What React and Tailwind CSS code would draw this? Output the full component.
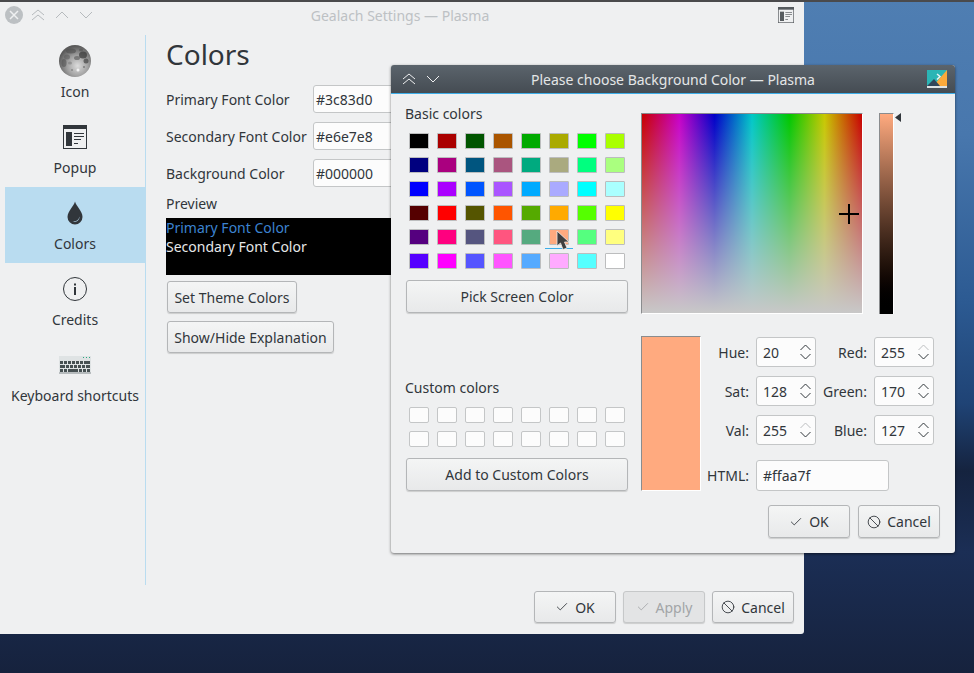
import { Check, Ban } from "lucide-react";

const basicColors = [
  "bg-[#000000]", "bg-[#aa0000]", "bg-[#005500]", "bg-[#aa5500]", "bg-[#00aa00]", "bg-[#aaaa00]", "bg-[#00ff00]", "bg-[#aaff00]",
  "bg-[#00007f]", "bg-[#aa007f]", "bg-[#00557f]", "bg-[#aa557f]", "bg-[#00aa7f]", "bg-[#aaaa7f]", "bg-[#00ff7f]", "bg-[#aaff7f]",
  "bg-[#0000ff]", "bg-[#aa00ff]", "bg-[#0055ff]", "bg-[#aa55ff]", "bg-[#00aaff]", "bg-[#aaaaff]", "bg-[#00ffff]", "bg-[#aaffff]",
  "bg-[#550000]", "bg-[#ff0000]", "bg-[#555500]", "bg-[#ff5500]", "bg-[#55aa00]", "bg-[#ffaa00]", "bg-[#55ff00]", "bg-[#ffff00]",
  "bg-[#55007f]", "bg-[#ff007f]", "bg-[#55557f]", "bg-[#ff557f]", "bg-[#55aa7f]", "bg-[#ffaa7f]", "bg-[#55ff7f]", "bg-[#ffff7f]",
  "bg-[#5500ff]", "bg-[#ff00ff]", "bg-[#5555ff]", "bg-[#ff55ff]", "bg-[#55aaff]", "bg-[#ffaaff]", "bg-[#55ffff]", "bg-[#ffffff]",
];

function MoonIcon() {
  return (
    <svg width="32" height="32" viewBox="0 0 32 32">
      <defs>
        <radialGradient id="moon" cx="58%" cy="65%" r="62%">
          <stop offset="0%" stopColor="#dcdcdc" />
          <stop offset="50%" stopColor="#a4a4a4" />
          <stop offset="100%" stopColor="#5a5a5a" />
        </radialGradient>
      </defs>
      <circle cx="16" cy="16" r="16" fill="url(#moon)" />
      <ellipse cx="12" cy="6" rx="5" ry="2.500" fill="#4f4f4f" opacity="0.6" />
      <ellipse cx="24" cy="10" rx="4" ry="3.500" fill="#3c3c3c" opacity="0.75" />
      <ellipse cx="27" cy="16" rx="2.500" ry="2.500" fill="#444" opacity="0.7" />
      <ellipse cx="18" cy="13" rx="3" ry="2" fill="#4c4c4c" opacity="0.55" />
      <ellipse cx="8" cy="12" rx="3" ry="2.500" fill="#5a5a5a" opacity="0.55" />
      <ellipse cx="5" cy="18" rx="2.500" ry="4" fill="#505050" opacity="0.55" />
      <ellipse cx="11" cy="18" rx="2" ry="1.500" fill="#6a6a6a" opacity="0.45" />
      <ellipse cx="22" cy="5" rx="2" ry="1.500" fill="#4a4a4a" opacity="0.5" />
      <circle cx="19" cy="25" r="1.500" fill="#f2f2f2" />
      <circle cx="25" cy="22" r="1" fill="#7c7c7c" />
      <circle cx="13" cy="25" r="1" fill="#8a8a8a" />
    </svg>
  );
}

function PopupIcon({ size = 24, className = "" }) {
  return (
    <svg width={size} height={size} viewBox="0 0 24 24" className={className}>
      <rect x="0.5" y="0.5" width="23" height="23" fill="#eff0f1" stroke="#31363b" />
      <rect x="0" y="0" width="24" height="4" fill="#31363b" />
      <rect x="3" y="7" width="6" height="14" fill="#31363b" />
      <rect x="11" y="8" width="10" height="1" fill="#31363b" />
      <rect x="11" y="11" width="10" height="1" fill="#31363b" />
      <rect x="11" y="14" width="7" height="1" fill="#31363b" />
      <rect x="11" y="18" width="4" height="1" fill="#31363b" />
    </svg>
  );
}

function DropIcon() {
  return (
    <svg width="16" height="24" viewBox="0 0 16 24">
      <path d="M8 0.5C7 5 0.5 10 0.5 16a7.5 7.5 0 0 0 15 0C15.500 10 9 5 8 0.500Z" fill="#31363b" />
      <path d="M12.5 15.500a5 5 0 0 1-7 5a6 6 0 0 0 7-5Z" fill="#b9dcf0" />
    </svg>
  );
}

function InfoIcon() {
  return (
    <svg width="24" height="24" viewBox="0 0 24 24">
      <circle cx="12" cy="12" r="11.500" fill="none" stroke="#31363b" />
      <rect x="11" y="10" width="2" height="8" fill="#31363b" />
      <rect x="11" y="6.500" width="2" height="2" fill="#31363b" />
    </svg>
  );
}

function KeyboardIcon() {
  const rows = [
    [[1, 3], [5, 3], [9, 3], [13, 3], [17, 3], [21, 3], [25, 6]],
    [[1, 5], [7, 3], [11, 3], [15, 3], [19, 3], [23, 3], [27, 4]],
    [[1, 3], [5, 3], [9, 10], [20, 3], [24, 3], [28, 3]],
  ];
  return (
    <svg width="32" height="18" viewBox="0 0 32 18">
      <rect x="0" y="0" width="32" height="18" fill="#dfe3e4" />
      <rect x="0" y="16" width="32" height="2" fill="#b7bcbe" />
      <rect x="24" y="1" width="1" height="1" fill="#2ba87f" />
      <rect x="27" y="1" width="1" height="1" fill="#2ba87f" />
      <rect x="30" y="1" width="1" height="1" fill="#2ba87f" />
      {rows.map((row, r) =>
        row.map(([x, w], i) => (
          <rect key={`${r}-${i}`} x={x} y={5 + r * 4} width={w} height="3" fill="#465052" />
        ))
      )}
    </svg>
  );
}

function ColorDialogIcon() {
  return (
    <svg width="20" height="18" viewBox="0 0 20 18">
      <rect width="20" height="16" fill="#2bb5b5" />
      <path d="M20 0V16H6Z" fill="#fba93a" />
      <path d="M0 16L7 9L13 16Z" fill="#31465a" />
      <path d="M10 4l3 2.500-3 3" fill="none" stroke="#e8f4f4" strokeWidth="1.500" />
      <rect y="16" width="20" height="2" fill="#dfe3e4" />
    </svg>
  );
}

function Chevron({ up, dim, className = "" }) {
  return (
    <svg width="11" height="7" viewBox="0 0 11 7" className={`${dim ? "opacity-30" : ""} ${className}`}>
      <path d={up ? "M0.500 6L5.500 1L10.500 6" : "M0.500 1L5.500 6L10.500 1"} fill="none" stroke="#31363b" strokeWidth="1" />
    </svg>
  );
}

function TitleArrows({ stroke }) {
  return (
    <svg width="74" height="16" viewBox="0 0 74 16">
      <path d="M2 8L8 3L14 8M2 13L8 8L14 13" fill="none" stroke={stroke} strokeWidth="1" />
      <path d="M26 11L32 5L38 11" fill="none" stroke={stroke} strokeWidth="1" />
      <path d="M50 5L56 11L62 5" fill="none" stroke={stroke} strokeWidth="1" />
    </svg>
  );
}

function PushButton({ children, className = "", disabled = false }) {
  return (
    <button
      className={`flex items-center justify-center gap-[6px] h-[32px] rounded-[3px] border text-[14px] shadow-[0_1px_1px_rgba(0,0,0,0.15)] ${
        disabled
          ? "border-[#c6c8c9] bg-[#e3e4e5] text-[#a2a5a7]"
          : "border-[#b4b6b8] bg-gradient-to-b from-[#f4f5f5] to-[#e8e9ea] text-[#31363b]"
      } ${className}`}
    >
      {children}
    </button>
  );
}

function SideItem({ icon, label, active }) {
  return (
    <div className={`h-[76px] flex flex-col items-center ${active ? "bg-[#b9dcf0]" : ""}`}>
      <div className="h-[32px] mt-[10px] flex items-center justify-center">{icon}</div>
      <div className="mt-[5px] text-[14px] leading-[20px] text-[#31363b] whitespace-nowrap">{label}</div>
    </div>
  );
}

function FormRow({ label, value }) {
  return (
    <div className="flex items-center h-[28px]">
      <div className="w-[147px] text-[14px] text-[#31363b] whitespace-nowrap">{label}</div>
      <div className="w-[300px] h-[28px] pl-[2px] flex items-center bg-[#fcfcfc] border border-[#c4c6c7] rounded-[3px] text-[14px] text-[#31363b]">
        {value}
      </div>
    </div>
  );
}

function Spin({ value, upDim }) {
  return (
    <div className="w-[60px] h-[30px] pl-[6px] flex items-center justify-between pr-[4px] bg-[#fcfcfc] border border-[#c4c6c7] rounded-[3px] text-[14px] text-[#31363b]">
      <span>{value}</span>
      <div className="flex flex-col gap-[2px]">
        <Chevron up dim={upDim} />
        <Chevron />
      </div>
    </div>
  );
}

function SpinLabel({ children }) {
  return <div className="text-right text-[14px] text-[#31363b] pr-[7px] whitespace-nowrap">{children}</div>;
}

export default function App() {
  return (
    <div className="relative w-[974px] h-[673px] overflow-hidden font-['Noto_Sans',sans-serif] bg-[linear-gradient(to_bottom,#4f7eb2_0%,#4877ad_20%,#2c5a92_45%,#1f4375_60%,#15233f_70%,#1b2e55_82%,#16223d_100%)]">
      <div className="absolute inset-x-0 top-0 h-[2px] bg-[#4a4a4c]" />

      {/* Settings window */}
      <div className="absolute left-0 top-[2px] w-[804px] h-[632px] flex flex-col bg-[#eff0f1] rounded-br-[3px]">
        <div className="h-[33px] shrink-0 pb-[7px] flex items-center">
          <div className="ml-[5px] w-[18px] h-[18px] rounded-full bg-[#bcc0c3] flex items-center justify-center">
            <svg width="10" height="10" viewBox="0 0 10 10">
              <path d="M1 1L9 9M9 1L1 9" stroke="#eff0f1" strokeWidth="1.500" />
            </svg>
          </div>
          <div className="ml-[7px]">
            <TitleArrows stroke="#b6babd" />
          </div>
          <div className="flex-1 text-center text-[14px] text-[#bdc1c4] -ml-[84px] pl-[2px]">Gealach Settings — Plasma</div>
          <div className="mr-[10px] w-[16px] h-[16px]">
            <PopupIcon size={16} className="opacity-80" />
          </div>
        </div>

        <div className="flex flex-1 min-h-0">
          <div className="w-[146px] shrink-0 pl-[5px] border-r border-[#b9dcf0]">
            <SideItem icon={<MoonIcon />} label="Icon" />
            <SideItem icon={<PopupIcon />} label="Popup" />
            <SideItem icon={<DropIcon />} label="Colors" active />
            <SideItem icon={<InfoIcon />} label="Credits" />
            <SideItem icon={<KeyboardIcon />} label="Keyboard shortcuts" />
          </div>

          <div className="flex-1 pl-[20px] flex flex-col">
            <h1 className="text-[28px] leading-[36px] mt-[1px] text-[#31363b]">Colors</h1>
            <div className="mt-[13px] flex flex-col gap-[9px]">
              <FormRow label="Primary Font Color" value="#3c83d0" />
              <FormRow label="Secondary Font Color" value="#e6e7e8" />
              <FormRow label="Background Color" value="#000000" />
            </div>
            <div className="mt-[7px] text-[14px] leading-[20px] text-[#31363b]">Preview</div>
            <div className="mt-[4px] w-[400px] h-[57px] bg-black text-[14px] leading-[19px]">
              <div className="text-[#3c83d0]">Primary Font Color</div>
              <div className="text-[#e6e7e8]">Secondary Font Color</div>
            </div>
            <div className="mt-[6px] ml-[1px] flex flex-col items-start gap-[8px]">
              <PushButton className="w-[130px]">Set Theme Colors</PushButton>
              <PushButton className="w-[167px]">Show/Hide Explanation</PushButton>
            </div>
          </div>
        </div>

        <div className="h-[49px] shrink-0 pt-[6px] pr-[10px] flex justify-end gap-[7px]">
          <PushButton className="w-[82px]">
            <Check size={14} strokeWidth={1.500} />
            OK
          </PushButton>
          <PushButton className="w-[82px]" disabled>
            <Check size={14} strokeWidth={1.500} />
            Apply
          </PushButton>
          <PushButton className="w-[82px]">
            <Ban size={14} strokeWidth={1.500} />
            Cancel
          </PushButton>
        </div>
      </div>

      {/* Color dialog */}
      <div className="absolute left-[391px] top-[65px] w-[564px] h-[488px] flex flex-col bg-[#eff0f1] rounded-[3px] shadow-[0_1px_3px_rgba(0,0,0,0.55)]">
        <div className="h-[29px] shrink-0 flex items-center rounded-t-[3px] bg-gradient-to-b from-[#5b646c] to-[#454c53] border-b border-[#3daee9]">
          <div className="ml-[10px] w-[48px] overflow-hidden">
            <svg width="48" height="16" viewBox="0 0 48 16">
              <path d="M2 8L8 3L14 8M2 13L8 8L14 13" fill="none" stroke="#eff0f1" strokeWidth="1" />
              <path d="M26 5L32 11L38 5" fill="none" stroke="#eff0f1" strokeWidth="1" />
            </svg>
          </div>
          <div className="flex-1 text-center text-[14px] text-[#e4e6e7] pr-[2px]">Please choose Background Color — Plasma</div>
          <div className="mr-[8px] ml-[28px]">
            <ColorDialogIcon />
          </div>
        </div>

        <div className="flex pl-[14px]">
          <div className="w-[224px] pt-[10px] flex flex-col">
            <div className="text-[14px] leading-[20px] text-[#31363b]">Basic colors</div>
            <div className="relative mt-[9px] ml-[4px] grid grid-cols-[repeat(8,20px)] gap-x-[8px] gap-y-[8px]">
              {basicColors.map((c, i) => (
                <div key={i} className={`h-[16px] border border-[#bcbdbe] rounded-[1px] ${c}`} />
              ))}
              <div className="absolute left-[136px] top-[115px] w-[28px] h-px bg-[#3daee9]" />
            </div>
            <PushButton className="mt-[11px] ml-[1px] w-[222px] !h-[33px]">Pick Screen Color</PushButton>

            <div className="mt-[65px] text-[14px] leading-[20px] text-[#31363b]">Custom colors</div>
            <div className="mt-[9px] ml-[4px] grid grid-cols-[repeat(8,20px)] gap-x-[8px] gap-y-[8px]">
              {Array.from({ length: 16 }).map((_, i) => (
                <div key={i} className="h-[16px] bg-[#fcfcfc] border border-[#c4c6c7] rounded-[2px]" />
              ))}
            </div>
            <PushButton className="mt-[11px] ml-[1px] w-[222px] !h-[33px]">Add to Custom Colors</PushButton>
          </div>

          <div className="ml-[12px] pt-[19px] flex flex-col">
            <div className="flex">
              <div className="relative w-[222px] h-[201px] border-l border-t border-[#8a8c8e] border-r border-b border-r-white border-b-white bg-[linear-gradient(to_top,rgba(200,200,200,1),rgba(200,200,200,0)),linear-gradient(to_right,#c80000,#c800c8_17%,#0000c8_33%,#00c8c8_50%,#00c800_67%,#c8c800_83%,#c80000)]">
                <div className="absolute left-[197px] top-[99px] w-[20px] h-[2px] bg-black" />
                <div className="absolute left-[206px] top-[90px] w-[2px] h-[20px] bg-black" />
              </div>
              <div className="relative ml-[16px] w-[15px] h-[201px] border-l border-t border-[#8a8c8e] border-r border-r-white bg-gradient-to-b from-[#ffaa7f] to-black">
                <svg width="6" height="9" viewBox="0 0 6 9" className="absolute left-[15px] -top-px">
                  <path d="M6 0V9L0 4.500Z" fill="#31363b" />
                </svg>
              </div>
            </div>

            <div className="flex mt-[22px]">
              <div className="w-[60px] h-[155px] border-l border-t border-[#8a8c8e] border-r border-b border-r-white border-b-white bg-[#ffaa7f]" />
              <div className="mt-px grid grid-cols-[55px_60px_58px_60px] grid-rows-[30px_30px_30px_37px] gap-y-[9px] items-center">
                <SpinLabel>Hue:</SpinLabel>
                <Spin value="20" />
                <SpinLabel>Red:</SpinLabel>
                <Spin value="255" upDim />
                <SpinLabel>Sat:</SpinLabel>
                <Spin value="128" />
                <SpinLabel>Green:</SpinLabel>
                <Spin value="170" />
                <SpinLabel>Val:</SpinLabel>
                <Spin value="255" upDim />
                <SpinLabel>Blue:</SpinLabel>
                <Spin value="127" />
                <div className="mt-[6px] col-start-1">
                  <SpinLabel>HTML:</SpinLabel>
                </div>
                <div className="mt-[6px] col-span-3 w-[133px] h-[31px] pl-[6px] flex items-center bg-[#fcfcfc] border border-[#c4c6c7] rounded-[3px] text-[14px] text-[#31363b]">
                  #ffaa7f
                </div>
              </div>
            </div>
          </div>
        </div>

        <div className="mt-[14px] pr-[15px] flex justify-end gap-[8px]">
          <PushButton className="w-[82px] !h-[33px]">
            <Check size={14} strokeWidth={1.500} />
            OK
          </PushButton>
          <PushButton className="w-[82px] !h-[33px]">
            <Ban size={14} strokeWidth={1.500} />
            Cancel
          </PushButton>
        </div>
      </div>

      {/* Mouse pointer */}
      <svg width="14" height="22" viewBox="0 0 14 22" className="absolute left-[556px] top-[230px]">
        <path d="M1 1L1 16L4.500 13L7 19.500L11 18L8.500 12L13 12Z" fill="#3f3f3f" stroke="#eeeeee" strokeWidth="0.800" />
      </svg>
    </div>
  );
}
